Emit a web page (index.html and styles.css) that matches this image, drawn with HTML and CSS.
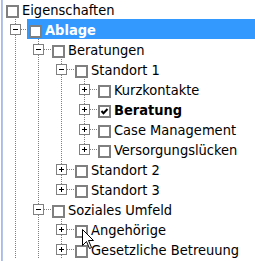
FILE: index.html
```html
<html>
<head>
<title>Eigenschaften</title>
<link rel="stylesheet" href="styles.css">
</head>
<body>
<div class="tree">

<div class="row">
 <span class="item"><span class="cb"></span><span class="lbl">Eigenschaften</span></span>
</div>

<div class="row">
 <span class="c more"><span class="exp"></span></span>
 <span class="item sel"><span class="cb"></span><span class="lbl">Ablage</span></span>
</div>

<div class="row">
 <span class="g v"></span>
 <span class="c more"><span class="exp"></span></span>
 <span class="item"><span class="cb"></span><span class="lbl">Beratungen</span></span>
</div>

<div class="row">
 <span class="g v"></span><span class="g v"></span>
 <span class="c more"><span class="exp"></span></span>
 <span class="item"><span class="cb"></span><span class="lbl">Standort 1</span></span>
</div>

<div class="row">
 <span class="g v"></span><span class="g v"></span><span class="g v"></span>
 <span class="c more"><span class="exp plus"></span></span>
 <span class="item"><span class="cb"></span><span class="lbl">Kurzkontakte</span></span>
</div>

<div class="row">
 <span class="g v"></span><span class="g v"></span><span class="g v"></span>
 <span class="c more"><span class="exp plus"></span></span>
 <span class="item bold"><span class="cb"><svg class="tick" width="9" height="9" viewBox="0 0 9 9"><polyline points="1.5,4 3.5,6.2 7.5,2" fill="none" stroke="#000" stroke-width="2"/></svg></span><span class="lbl">Beratung</span></span>
</div>

<div class="row">
 <span class="g v"></span><span class="g v"></span><span class="g v"></span>
 <span class="c more"><span class="exp plus"></span></span>
 <span class="item"><span class="cb"></span><span class="lbl">Case Management</span></span>
</div>

<div class="row">
 <span class="g v"></span><span class="g v"></span><span class="g v"></span>
 <span class="c"><span class="exp plus"></span></span>
 <span class="item"><span class="cb"></span><span class="lbl">Versorgungslücken</span></span>
</div>

<div class="row">
 <span class="g v"></span><span class="g v"></span>
 <span class="c more"><span class="exp plus"></span></span>
 <span class="item"><span class="cb"></span><span class="lbl">Standort 2</span></span>
</div>

<div class="row">
 <span class="g v"></span><span class="g v"></span>
 <span class="c"><span class="exp plus"></span></span>
 <span class="item"><span class="cb"></span><span class="lbl">Standort 3</span></span>
</div>

<div class="row">
 <span class="g v"></span>
 <span class="c more"><span class="exp"></span></span>
 <span class="item"><span class="cb"></span><span class="lbl">Soziales Umfeld</span></span>
</div>

<div class="row">
 <span class="g v"></span><span class="g v"></span>
 <span class="c more"><span class="exp plus"></span></span>
 <span class="item"><span class="cb"></span><span class="lbl">Angehörige</span></span>
</div>

<div class="row">
 <span class="g v"></span><span class="g v"></span>
 <span class="c more"><span class="exp plus"></span></span>
 <span class="item"><span class="cb"></span><span class="lbl">Gesetzliche Betreuung</span></span>
</div>

</div>

<svg class="cursor" width="13" height="21" viewBox="0 0 13 21">
<path d="M0.5,0.5 L0.5,16.5 L4.5,12.5 L7.5,19.5 L9.5,18.5 L6.5,11.5 L11.5,11.5 Z" fill="#fff" stroke="#000" stroke-width="1"/>
</svg>
</body>
</html>
```
FILE: styles.css
```css
body { margin:0; background:#fff; color:#000; overflow:hidden;
  font-family:"DejaVu Sans Condensed", "DejaVu Sans", sans-serif; font-stretch:condensed; font-size:14.5px; }

/* tree frame, with the thin coloured edge on the left */
.tree { margin:-1px 0 0 1px; padding-left:2px; height:262px; border-left:1px solid #eca4ae; box-shadow:inset 1px 0 #b4c4ec; }
.row { display:flex; height:20px; }

/* guide cells and connector cells, 23px per level */
.g, .c { width:23px; flex:none; position:relative; }
.g.v::before, .c::before { content:""; position:absolute; left:11px; top:0; width:1px; height:20px;
  background:repeating-linear-gradient(#808080 0 1px, transparent 1px 2px); }
.c::before { height:10px; }
.c.more::before { height:20px; }
.c::after { content:""; position:absolute; left:17px; top:10px; width:8px; height:1px;
  background:repeating-linear-gradient(90deg, #808080 0 1px, transparent 1px 2px); }

/* expand / collapse box */
.exp { position:absolute; left:6px; top:5px; width:9px; height:9px; border:1px solid #808080; background:#fff; z-index:1; }
.exp::before { content:""; position:absolute; left:2px; top:4px; width:5px; height:1px; background:#000; }
.exp.plus::after { content:""; position:absolute; left:4px; top:2px; width:1px; height:5px; background:#000; }

/* checkbox + text */
.item { flex:1; display:flex; padding-left:2px; white-space:nowrap; }
.cb { flex:none; width:9px; height:9px; margin-top:6px; border:2px solid #808080; background:#fff; position:relative; }
.tick { position:absolute; left:0; top:0; }
.lbl { margin-left:3px; line-height:20px; padding-top:1px; height:19px; }
.bold { font-weight:bold; }
.sel { background:#3399ff; color:#fff; font-weight:bold; }

.cursor { position:absolute; left:82px; top:229px; }
```
